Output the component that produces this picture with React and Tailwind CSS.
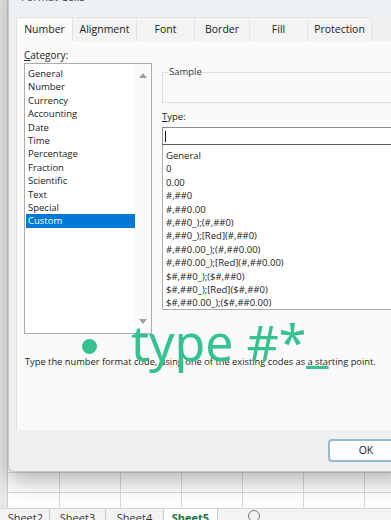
const categories = ['General', 'Number', 'Currency', 'Accounting', 'Date', 'Time', 'Percentage', 'Fraction', 'Scientific', 'Text', 'Special', 'Custom']

const types = [
  'General',
  '0',
  '0.00',
  '#,##0',
  '#,##0.00',
  '#,##0_);(#,##0)',
  '#,##0_);[Red](#,##0)',
  '#,##0.00_);(#,##0.00)',
  '#,##0.00_);[Red](#,##0.00)',
  '$#,##0_);($#,##0)',
  '$#,##0_);[Red]($#,##0)',
  '$#,##0.00_);($#,##0.00)',
]

const tabs = [
  { label: 'Number', w: 'w-[57px]' },
  { label: 'Alignment', w: 'w-[64px]' },
  { label: 'Font', w: 'w-[58px]' },
  { label: 'Border', w: 'w-[55px]' },
  { label: 'Fill', w: 'w-[58px]' },
  { label: 'Protection', w: 'w-[64px]' },
]

const font = { fontFamily: '"Open Sans", "Noto Sans", sans-serif' }

// spreadsheet behind the dialog
const SheetGrid = () => (
  <div className="absolute left-[-1px] top-[-7px] grid grid-cols-[repeat(7,61px)]">
    {Array.from({ length: 7 * 26 }).map((_, i) => (
      <div key={i} className="h-[20px] border-r border-b border-[#dadada] bg-white" />
    ))}
  </div>
)

const SheetTabs = () => (
  <div className="absolute left-0 right-0 top-[508px] h-[20px] flex items-start bg-[#f3f3f3] border-t border-[#d4d4d4] text-[11px] text-[#333]" style={font}>
    <div className="w-[50px] flex justify-end pr-[6px] pt-[1px] border-r border-[#c8c8c8]">Sheet2</div>
    <div className="w-[56px] flex justify-center pt-[1px] border-r border-[#c8c8c8]">Sheet3</div>
    <div className="w-[57px] flex justify-center pt-[1px]">Sheet4</div>
    <div className="w-[55px] h-full flex justify-center pt-[1px] bg-white font-bold text-[#1e7145] border-x border-[#c8c8c8]">Sheet5</div>
    <div className="ml-[30px] mt-[1px] w-[12px] h-[12px] rounded-full border border-[#777]" />
  </div>
)

export default function App() {
  return (
    <div className="relative w-[391px] h-[520px] overflow-hidden bg-white" style={font}>
      <SheetGrid />
      <div className="absolute left-0 top-0 w-[8px] h-[520px] bg-[#e9e9e9] border-r border-[#d0d0d0]" />
      <SheetTabs />

      {/* Format Cells dialog */}
      <div className="absolute left-[8px] top-[-20px] w-[400px] h-[492px] flex flex-col bg-[#f0f0f0] rounded-bl-[7px] border-l border-b border-[#c9c9c9] shadow-[0_10px_22px_rgba(0,0,0,0.28)]">
        <div className="h-[38px] pl-[12px] pt-[9px] text-[11px] text-[#444] bg-[#eef1f4]">Format Cells</div>

        <div className="flex flex-col pl-[7px]">
          <div className="flex h-[24px] text-[10.5px] text-[#222]">
            {tabs.map((t, i) => (
              <div
                key={t.label}
                className={`${t.w} flex items-center justify-center ${i === 0 ? 'bg-[#fafafa] border-x border-t border-[#e1e1e1]' : 'bg-[#f3f3f3] border-r border-t border-[#e4e4e4]'}`}
              >
                {t.label}
              </div>
            ))}
          </div>

          <div className="h-[389px] bg-[#fafafa] border-l border-[#e1e1e1] px-[7px] pt-[8px] flex flex-col">
            <div className="flex">
              {/* Category */}
              <div className="flex flex-col w-[128px]">
                <div className="h-[12px] text-[10px] leading-[12px] text-[#222]">
                  <span className="underline">C</span>ategory:
                </div>
                <div className="mt-[2px] h-[271px] flex bg-white border border-[#acacac]">
                  <div className="flex-1 flex flex-col pt-[3px] pl-[1px]">
                    {categories.map((c) => (
                      <div
                        key={c}
                        className={`h-[13.4px] leading-[13.4px] pl-[2px] text-[9.5px] ${c === 'Custom' ? 'bg-[#0078d7] text-white' : 'text-[#222]'}`}
                      >
                        {c}
                      </div>
                    ))}
                  </div>
                  <div className="w-[16px] flex flex-col items-center justify-between py-[9px] bg-[#fafafa]">
                    <div className="w-0 h-0 border-x-[4px] border-x-transparent border-b-[5px] border-b-[#a0a0a0]" />
                    <div className="w-0 h-0 border-x-[4px] border-x-transparent border-t-[5px] border-t-[#a0a0a0]" />
                  </div>
                </div>
              </div>

              {/* Sample + Type */}
              <div className="ml-[10px] flex-1 flex flex-col">
                <div className="relative mt-[23px] h-[31px] border border-[#dcdcdc]">
                  <div className="absolute left-[5px] top-[-7px] px-[1px] bg-[#fafafa] text-[9.5px] leading-[12px] text-[#333]">Sample</div>
                </div>
                <div className="mt-[8px] h-[12px] text-[9.5px] leading-[12px] text-[#222]">
                  <span className="underline">T</span>ype:
                </div>
                <div className="mt-[4px] h-[18px] bg-white border border-[#8d8d8d] border-b-[#5a5a5a] flex items-center pl-[2px]">
                  <div className="w-px h-[11px] bg-[#111]" />
                </div>
                <div className="h-[165px] bg-white border border-[#acacac] border-t-0 pt-[4px] pl-[3px] overflow-hidden">
                  {types.map((t) => (
                    <div key={t} className="h-[13.4px] leading-[13.4px] text-[9.5px] text-[#222] whitespace-nowrap">{t}</div>
                  ))}
                </div>
              </div>
            </div>

            <div className="mt-[21px] ml-[1px] text-[9.3px] text-[#222] whitespace-nowrap">
              Type the number format code, using one of the existing codes as a starting point.
            </div>
          </div>

          <div className="h-[41px] flex justify-end items-start pt-[9px] pr-[4px]">
            <div className="w-[76px] h-[23px] rounded-[4px] border-2 border-[#9ab8d0] bg-[#fdfdfd] flex items-center justify-center text-[10.5px] text-[#222]">
              OK
            </div>
          </div>
        </div>
      </div>

      {/* video caption overlay */}
      <div className="absolute left-[82px] top-[339px] w-[15px] h-[15px] rounded-full bg-[#36c28f]" />
      <div className="absolute left-[131px] top-[312px] text-[50px] leading-[60px] text-[#36c28f] whitespace-nowrap" style={{ fontFamily: '"Noto Sans", sans-serif' }}>
        type #*_
      </div>
    </div>
  )
}
